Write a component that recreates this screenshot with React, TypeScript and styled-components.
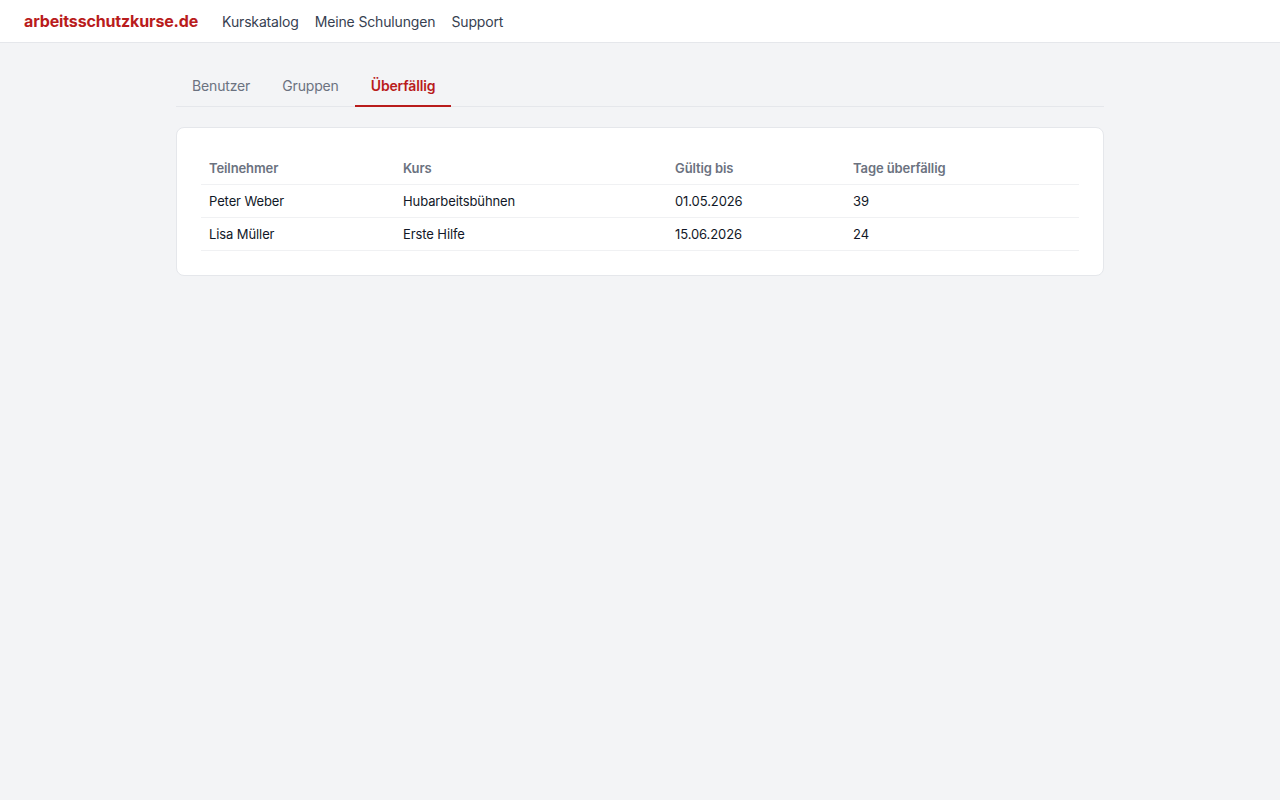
import React from "react";
import styled, { createGlobalStyle } from "styled-components";

const Global = createGlobalStyle`
  * { box-sizing: border-box; }
  html, body { margin: 0; padding: 0; }
  body {
    background: #f3f4f6;
    font-family: Inter, "Noto Sans", "Liberation Sans", sans-serif;
    color: #111827;
    min-height: 800px;
  }
`;

const Header = styled.header`
  height: 43px;
  background: #ffffff;
  border-bottom: 1px solid #e5e7eb;
  display: flex;
  align-items: center;
  padding: 0 24px;
  gap: 24px;
`;

const Logo = styled.a`
  font-size: 16px;
  font-weight: 700;
  letter-spacing: -0.15px;
  color: #b91c1c;
  text-decoration: none;
`;

const Nav = styled.nav`
  display: flex;
  gap: 16px;
`;

const NavLink = styled.a`
  font-size: 14px;
  letter-spacing: -0.15px;
  color: #374151;
  text-decoration: none;
`;

const Main = styled.main`
  width: 928px;
  margin: 0 auto;
  padding-top: 24px;
`;

const Tabs = styled.div`
  display: flex;
  border-bottom: 1px solid #e5e7eb;
  margin-bottom: 20px;
`;

const Tab = styled.button<{ $active?: boolean }>`
  background: none;
  border: none;
  font-family: inherit;
  font-size: 14px;
  letter-spacing: -0.15px;
  line-height: 20px;
  padding: 9px 16px 9px;
  margin-bottom: -1px;
  border-bottom: 2px solid ${(p) => (p.$active ? "#b91c1c" : "transparent")};
  color: ${(p) => (p.$active ? "#b91c1c" : "#6b7280")};
  font-weight: ${(p) => (p.$active ? 600 : 400)};
  cursor: pointer;
`;

const Card = styled.div`
  background: #ffffff;
  border: 1px solid #e5e7eb;
  border-radius: 8px;
  padding: 24px;
`;

const Table = styled.table`
  width: 100%;
  border-collapse: collapse;
  table-layout: fixed;
  font-size: 13px;
  letter-spacing: -0.1px;
`;

const Th = styled.th<{ $w?: number }>`
  ${(p) => (p.$w ? `width: ${p.$w}px;` : "")}
  text-align: left;
  font-weight: 600;
  color: #6b7280;
  padding: 8px 8px;
  line-height: 16px;
  border-bottom: 1px solid #f0f1f3;
`;

const Td = styled.td`
  padding: 8px 8px;
  line-height: 16px;
  color: #111827;
  border-bottom: 1px solid #f0f1f3;
`;

const rows = [
  { name: "Peter Weber", course: "Hubarbeitsbühnen", until: "01.05.2026", days: 39 },
  { name: "Lisa Müller", course: "Erste Hilfe", until: "15.06.2026", days: 24 },
];

export default function App() {
  return (
    <>
      <Global />
      <Header>
        <Logo href="#">arbeitsschutzkurse.de</Logo>
        <Nav>
          <NavLink href="#">Kurskatalog</NavLink>
          <NavLink href="#">Meine Schulungen</NavLink>
          <NavLink href="#">Support</NavLink>
        </Nav>
      </Header>
      <Main>
        <Tabs>
          <Tab>Benutzer</Tab>
          <Tab>Gruppen</Tab>
          <Tab $active>Überfällig</Tab>
        </Tabs>
        <Card>
          <Table>
            <thead>
              <tr>
                <Th $w={194}>Teilnehmer</Th>
                <Th $w={272}>Kurs</Th>
                <Th $w={178}>Gültig bis</Th>
                <Th>Tage überfällig</Th>
              </tr>
            </thead>
            <tbody>
              {rows.map((r) => (
                <tr key={r.name}>
                  <Td>{r.name}</Td>
                  <Td>{r.course}</Td>
                  <Td>{r.until}</Td>
                  <Td>{r.days}</Td>
                </tr>
              ))}
            </tbody>
          </Table>
        </Card>
      </Main>
    </>
  );
}
